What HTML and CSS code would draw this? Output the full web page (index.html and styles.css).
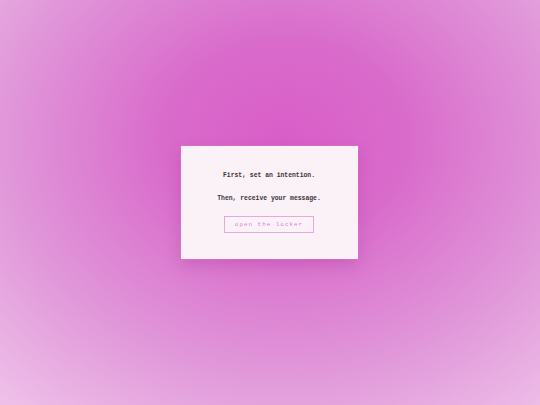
FILE: index.html
```html
<!DOCTYPE html>
<html>
<head>
<meta charset="utf-8">
<link rel="stylesheet" href="styles.css">
</head>
<body>
<main class="stage">
  <section class="card">
    <p class="line">First, set an intention.</p>
    <p class="line">Then, receive your message.</p>
    <button class="btn">open the locker</button>
  </section>
</main>
</body>
</html>
```

FILE: styles.css
```css
html, body {
  margin: 0;
  padding: 0;
  width: 540px;
  height: 405px;
  overflow: hidden;
}
.stage {
  width: 540px;
  height: 405px;
  background: radial-gradient(ellipse 400px 330px at 285px 140px, #d95ec8 0%, #d96bcb 30%, #e199da 72%, #eebfe8 105%);
  display: flex;
  align-items: center;
  justify-content: center;
}
.card {
  box-sizing: border-box;
  width: 177px;
  height: 113px;
  margin-left: -2px;
  background: #fbf2f8;
  box-shadow: 0 0 0 0.5px rgba(225, 130, 210, 0.6), 0 6px 14px rgba(150, 40, 130, 0.25);
  display: flex;
  flex-direction: column;
  align-items: center;
  padding-top: 26px;
  font-family: "Liberation Mono", "DejaVu Sans Mono", monospace;
}
.line {
  margin: 0 0 15px 0;
  font-size: 6.4px;
  line-height: 8px;
  color: #3a3438;
  font-weight: bold;
}
.line + .line {
  margin-bottom: 13px;
}
.btn {
  width: 90px;
  height: 17px;
  border: 1px solid #e6a9df;
  background: transparent;
  color: #de7fd2;
  font-family: "Liberation Mono", "DejaVu Sans Mono", monospace;
  font-size: 6px;
  letter-spacing: 0.95px;
  padding: 0;
}
```
